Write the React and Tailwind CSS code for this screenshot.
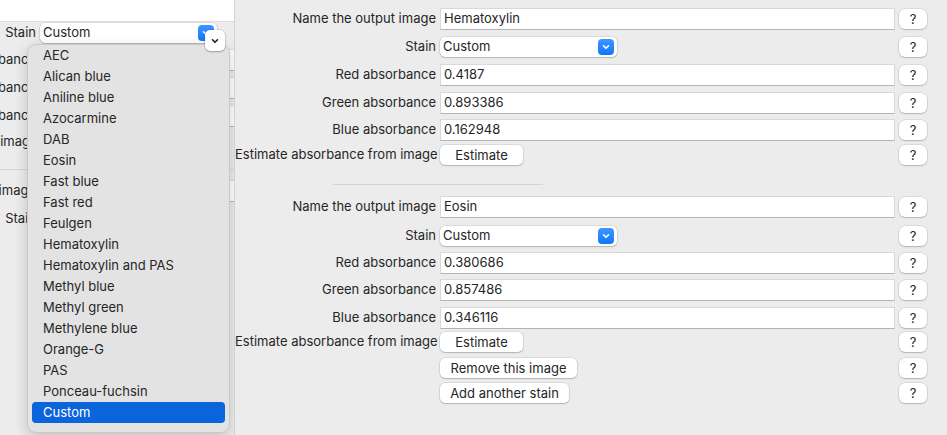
import { useState } from "react";

const stains = [
    "AEC", "Alican blue", "Aniline blue", "Azocarmine", "DAB", "Eosin", "Fast blue", "Fast red",
    "Feulgen", "Hematoxylin", "Hematoxylin and PAS", "Methyl blue", "Methyl green", "Methylene blue",
    "Orange-G", "PAS", "Ponceau-fuchsin", "Custom",
];

function Chevron({ className }) {
    return (
        <svg width="10" height="10" viewBox="0 0 10 10" className={className}>
            <path d="M2.5 3.8 L5 6.3 L7.5 3.8" fill="none" stroke="currentColor" strokeWidth="1.6" strokeLinecap="round" strokeLinejoin="round" />
        </svg>
    );
}

function TextField({ value }) {
    return (
        <div className="h-[22px] w-[455px] shrink-0 bg-white border border-[#d9d9d9] border-b-[#b4b4b4] px-[3px] flex items-center">
            {value}
        </div>
    );
}

function Select({ value }) {
    return (
        <div className="h-[20px] w-[177px] shrink-0 bg-white rounded-[5px] shadow-[0_0_0_0.5px_rgba(0,0,0,0.14),0_1px_1.5px_rgba(0,0,0,0.18)] flex items-center justify-between pl-[3px] pr-[3px]">
            <span>{value}</span>
            <span className="w-[16px] h-[16px] rounded-[4px] bg-gradient-to-b from-[#3d95ff] to-[#0a78fb] text-white flex items-center justify-center">
                <Chevron />
            </span>
        </div>
    );
}

function PushButton({ label, width }) {
    return (
        <button className={`h-[20px] ${width} shrink-0 bg-white rounded-[5px] shadow-[0_0_0_0.5px_rgba(0,0,0,0.14),0_1px_1.5px_rgba(0,0,0,0.18)] flex items-center justify-center leading-none`}>
            {label}
        </button>
    );
}

function HelpButton() {
    return (
        <button className="w-[28px] h-[20px] shrink-0 bg-white rounded-[6px] shadow-[0_0_0_0.5px_rgba(0,0,0,0.14),0_1px_1.5px_rgba(0,0,0,0.18)] flex items-center justify-center leading-none">
            ?
        </button>
    );
}

function Row({ label, children, mt, help = true }) {
    return (
        <div className={`flex items-center ${mt}`}>
            <div className="w-[201px] shrink-0 text-right whitespace-nowrap">{label}</div>
            <div className="w-[455px] shrink-0 ml-[4px] flex">{children}</div>
            <div className="ml-[4px] w-[28px] flex justify-center">{help && <HelpButton />}</div>
        </div>
    );
}

function StainBlock({ name, values, first }) {
    return (
        <>
            <Row label="Name the output image" mt={first ? "mt-0" : "mt-[11px]"}>
                <TextField value={name} />
            </Row>
            <Row label="Stain" mt={first ? "mt-[7px]" : "mt-[8px]"}>
                <Select value="Custom" />
            </Row>
            <Row label="Red absorbance" mt={first ? "mt-[7px]" : "mt-[6px]"}>
                <TextField value={values[0]} />
            </Row>
            <Row label="Green absorbance" mt={first ? "mt-[6px]" : "mt-[5px]"}>
                <TextField value={values[1]} />
            </Row>
            <Row label="Blue absorbance" mt={first ? "mt-[5px]" : "mt-[6px]"}>
                <TextField value={values[2]} />
            </Row>
            <Row label="Estimate absorbance from image" mt={first ? "mt-[4px]" : "mt-[3px]"}>
                <PushButton label="Estimate" width="w-[83px]" />
            </Row>
        </>
    );
}

export default function App() {
    const [stain] = useState("Custom");

    return (
        <div className="w-[947px] h-[435px] flex bg-[#ececec] text-[13px] text-[#262626] font-['Inter','Noto_Sans',sans-serif] overflow-hidden">
            {/* window behind, partly hidden by the open menu */}
            <div className="w-[235px] h-full shrink-0 relative overflow-hidden border-r border-[#d2d2d2]">
                <div className="h-[22px] bg-white border-b border-[#dedede]" />
                <div className="-ml-[165px]">
                    <Row label="Stain" mt="mt-[1px]" help={false}>
                        <Select value={stain} />
                    </Row>
                    <Row label="Red absorbance" mt="mt-[6px]" help={false}>
                        <TextField value="0.4187" />
                    </Row>
                    <Row label="Green absorbance" mt="mt-[6px]" help={false}>
                        <TextField value="0.893386" />
                    </Row>
                    <Row label="Blue absorbance" mt="mt-[6px]" help={false}>
                        <TextField value="0.162948" />
                    </Row>
                    <Row label="Estimate absorbance from image" mt="mt-[5px]" help={false}>
                        <PushButton label="Estimate" width="w-[83px]" />
                    </Row>
                    <div className="mt-[17px] h-px bg-[#d6d6d6]" />
                    <Row label="Name the output image" mt="mt-[10px]" help={false}>
                        <TextField value="Eosin" />
                    </Row>
                    <Row label="Stain" mt="mt-[7px]" help={false}>
                        <Select value="Custom" />
                    </Row>
                </div>

                {/* open popup menu */}
                <div className="absolute left-[205px] top-[30px] w-[20px] h-[21px] z-20 bg-white rounded-[5px] shadow-[0_0_0_0.5px_rgba(0,0,0,0.15),0_1px_2px_rgba(0,0,0,0.25)] flex items-center justify-center text-[#1f1f1f]">
                    <Chevron />
                </div>
                <div className="absolute left-[27px] top-[44px] w-[203px] h-[389px] z-10 bg-[#e3e3e3] rounded-[9px] border border-[#c9c9c9] shadow-[0_4px_14px_rgba(0,0,0,0.18)] pb-[10px]">
                    {stains.map((s) => (
                        <div
                            key={s}
                            className={
                                s === stain
                                    ? "h-[21px] mx-[4px] px-[11px] rounded-[4px] bg-[#0a64dc] text-white flex items-center"
                                    : "h-[21px] mx-[4px] px-[11px] flex items-center"
                            }
                        >
                            {s}
                        </div>
                    ))}
                </div>
            </div>

            {/* main form */}
            <div className="flex-1 pt-[8px]">
                <StainBlock name="Hematoxylin" values={["0.4187", "0.893386", "0.162948"]} first />
                <div className="mt-[19px] ml-[98px] w-[210px] h-px bg-[#d4d4d4]" />
                <StainBlock name="Eosin" values={["0.380686", "0.857486", "0.346116"]} />
                <Row label="" mt="mt-[6px]">
                    <PushButton label="Remove this image" width="w-[137px]" />
                </Row>
                <Row label="" mt="mt-[5px]">
                    <PushButton label="Add another stain" width="w-[129px]" />
                </Row>
            </div>
        </div>
    );
}
